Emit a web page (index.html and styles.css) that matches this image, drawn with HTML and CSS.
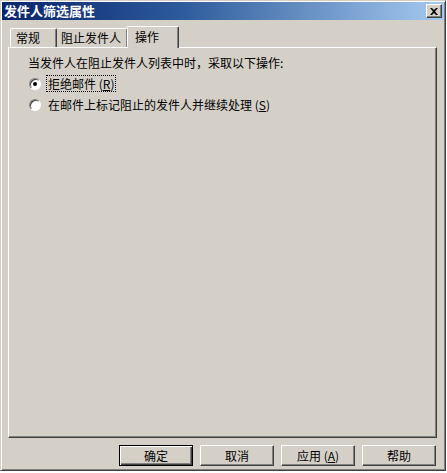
FILE: index.html
```html
<!DOCTYPE html>
<html lang="zh-CN">
<head>
    <meta charset="UTF-8">
    <title>发件人筛选属性</title>
    <link rel="stylesheet" href="styles.css">
</head>
<body>
<div class="window">
    <div class="titlebar">
        <span class="title">发件人筛选属性</span>
        <button class="close-btn" type="button">
            <svg width="8" height="7" viewBox="0 0 8 7"><path d="M0 0h2l2 2 2-2h2L5 3.5 8 7H6L4 5 2 7H0l3-3.5z" fill="#000"/></svg>
        </button>
    </div>

    <div class="body">
        <!-- pestañas -->
        <div class="tabs">
            <div class="tab tab-general">常规</div>
            <div class="tab tab-block">阻止发件人</div>
            <div class="tab tab-action active">操作</div>
        </div>

        <div class="panel">
            <p class="intro">当发件人在阻止发件人列表中时，采取以下操作:</p>
            <label class="radio-row">
                <span class="radio checked"></span>
                <span class="focus">拒绝邮件 (<u>R</u>)</span>
            </label>
            <label class="radio-row">
                <span class="radio"></span>
                <span class="label-text">在邮件上标记阻止的发件人并继续处理 (<u>S</u>)</span>
            </label>
        </div>

        <div class="buttons">
            <button type="button" class="btn default">确定</button>
            <button type="button" class="btn">取消</button>
            <button type="button" class="btn">应用 (<u>A</u>)</button>
            <button type="button" class="btn">帮助</button>
        </div>
    </div>
</div>
</body>
</html>
```

FILE: styles.css
```css
body {
    margin: 0;
    background-color: #fff;
    font-family: "Noto Sans CJK SC", "DejaVu Sans", sans-serif;
    font-size: 12px;
    color: #000;
}

.window {
    width: 446px;
    height: 471px;
    background-color: #d4d0c8;
    border: 1px solid;
    border-color: #d4d0c8 #404040 #404040 #d4d0c8;
    box-shadow: inset 1px 1px 0 #fff, inset -1px -1px 0 #808080;
    padding: 1px;
    box-sizing: border-box;
    display: flex;
    flex-direction: column;
}

.titlebar {
    height: 18px;
    flex-shrink: 0;
    background: linear-gradient(to right, #0a246a, #2c5a9a 40%, #a6caf0);
    display: flex;
    align-items: center;
    justify-content: space-between;
    padding: 0 2px;
}

.title {
    color: #fff;
    font-weight: bold;
    font-size: 13px;
    line-height: 18px;
}

.close-btn {
    width: 16px;
    height: 14px;
    padding: 0;
    background-color: #d4d0c8;
    border: 1px solid;
    border-color: #fff #404040 #404040 #fff;
    box-shadow: inset -1px -1px 0 #808080;
    display: flex;
    align-items: center;
    justify-content: center;
}

.body {
    flex-grow: 1;
    display: flex;
    flex-direction: column;
    padding: 6px 7px 0 6px;
}

.tabs {
    display: flex;
    align-items: flex-end;
    height: 21px;
    padding-left: 2px;
    position: relative;
    z-index: 1;
}

.tab {
    height: 19px;
    line-height: 18px;
    border: 1px solid;
    border-color: #fff #404040 transparent #fff;
    border-bottom: none;
    box-shadow: inset -1px 0 0 #808080;
    border-radius: 2px 2px 0 0;
    box-sizing: border-box;
    font-size: 12px;
}

.tab-general {
    width: 47px;
    padding-left: 5px;
}

.tab-block {
    width: 71px;
    padding-left: 4px;
    border-left: none;
}

.tab-action {
    width: 52px;
    padding-left: 7px;
}

.tab.active {
    height: 22px;
    margin-bottom: -1px;
    margin-left: -1px;
    background-color: #d4d0c8;
    line-height: 19px;
}

.panel {
    height: 391px;
    flex-shrink: 0;
    border: 1px solid;
    border-color: #fff #404040 #404040 #fff;
    box-shadow: inset -1px -1px 0 #808080;
    padding: 8px 0 0 19px;
    box-sizing: border-box;
}

.intro {
    margin: 0 0 3px;
    line-height: 14px;
}

.radio-row {
    display: flex;
    align-items: center;
    gap: 6px;
    height: 21px;
    padding-left: 1px;
}

.radio {
    width: 12px;
    height: 12px;
    border-radius: 50%;
    background-color: #fff;
    border: 1px solid;
    border-color: #808080 #fff #fff #808080;
    box-shadow: inset 1px 1px 0 #404040;
    box-sizing: border-box;
    display: flex;
    align-items: center;
    justify-content: center;
}

.radio.checked::after {
    content: "";
    width: 4px;
    height: 4px;
    border-radius: 50%;
    background-color: #000;
}

.focus {
    outline: 1px dotted #000;
    padding: 0 1px;
    line-height: 15px;
}

.label-text {
    padding-left: 1px;
}

.buttons {
    display: flex;
    justify-content: flex-end;
    gap: 7px;
    padding-top: 7px;
    padding-right: 1px;
}

.btn {
    width: 74px;
    height: 21px;
    padding: 0;
    background-color: #d4d0c8;
    font-family: "Noto Sans CJK SC", "DejaVu Sans", sans-serif;
    font-size: 12px;
    color: #000;
    border: 1px solid;
    border-color: #fff #404040 #404040 #fff;
    box-shadow: inset -1px -1px 0 #808080;
}

.btn.default {
    border: 1px solid #000;
    box-shadow: inset 1px 1px 0 #fff, inset -1px -1px 0 #404040, inset -2px -2px 0 #808080;
}
```
